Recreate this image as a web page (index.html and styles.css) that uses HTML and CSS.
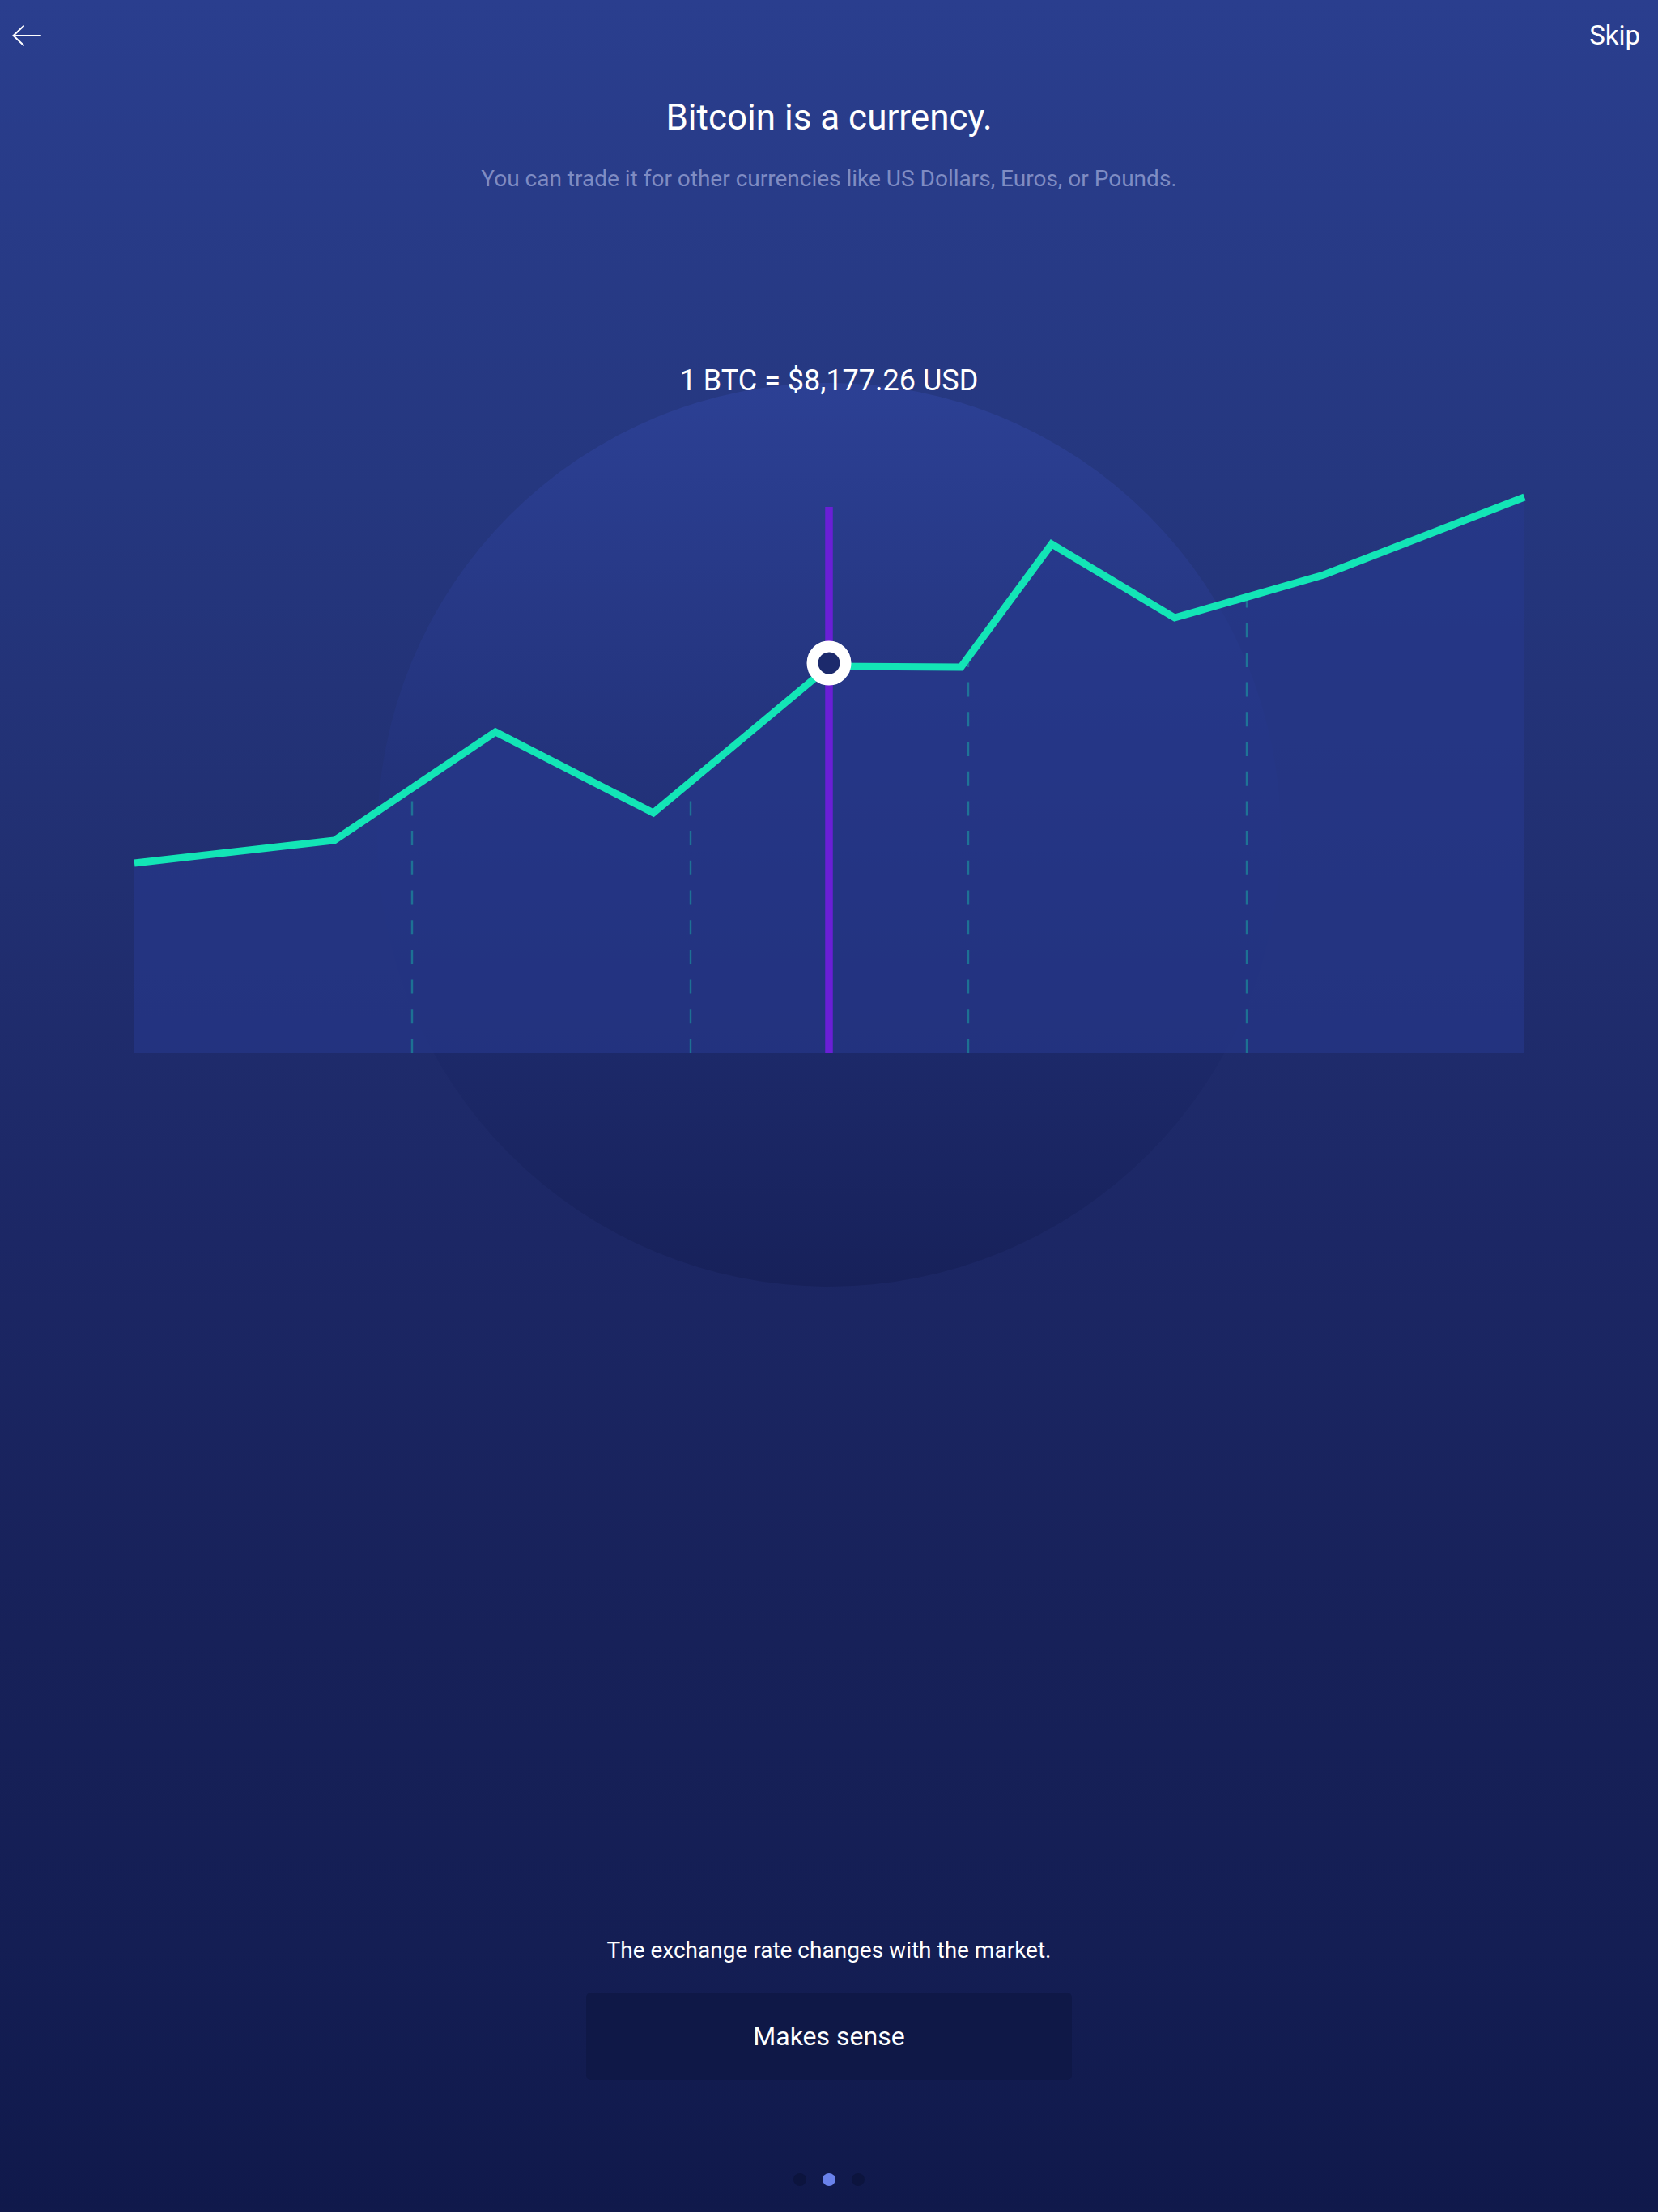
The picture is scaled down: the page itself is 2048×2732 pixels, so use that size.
FILE: index.html
```html
<!DOCTYPE html>
<html lang="en">
<head>
<meta charset="utf-8">
<title>Bitcoin is a currency.</title>
<link rel="stylesheet" href="styles.css">
</head>
<body>
<div class="screen">
  <header class="topbar">
    <button class="back" aria-label="Back">
      <svg width="36" height="26" viewBox="0 0 36 26" fill="none" stroke="#ffffff" stroke-width="2" stroke-linecap="round" stroke-linejoin="round">
        <path d="M1.5 13 H35"/>
        <path d="M14 1.2 L1.5 13 L14 24.8"/>
      </svg>
    </button>
    <span class="skip">Skip</span>
  </header>

  <h1 class="title">Bitcoin is a currency.</h1>
  <p class="subtitle">You can trade it for other currencies like US Dollars, Euros, or Pounds.</p>

  <section class="chart">
    <svg class="chart-art" width="2048" height="1180" viewBox="0 420 2048 1180">
      <defs>
        <linearGradient id="orb" x1="0" y1="0" x2="0" y2="1">
          <stop offset="0" stop-color="#2c4094"/>
          <stop offset="1" stop-color="#17215a"/>
        </linearGradient>
      </defs>
      <circle cx="1024" cy="1032" r="558" fill="url(#orb)"/>
      <polygon fill="#26398c" fill-opacity="0.62"
        points="166,1067 413,1039 612,905 807,1005 1024,824 1187,825 1299,673 1451,764 1635,711 1883,615 1883,1302 166,1302"/>
      <g stroke="#13e5b6" stroke-opacity="0.35" stroke-width="2.4" stroke-dasharray="18 18.7">
        <line x1="509" y1="1302" x2="509" y2="978"/>
        <line x1="853" y1="1302" x2="853" y2="970"/>
        <line x1="1196" y1="1302" x2="1196" y2="814"/>
        <line x1="1540" y1="1302" x2="1540" y2="740"/>
      </g>
      <line x1="1024" y1="627" x2="1024" y2="1302" stroke="#6a1fd6" stroke-width="9.5"/>
      <polyline fill="none" stroke="#13e5b6" stroke-width="9" stroke-linejoin="miter"
        points="166,1067 413,1039 612,905 807,1005 1024,824 1187,825 1299,673 1451,764 1635,711 1883,615"/>
      <circle cx="1024" cy="820" r="20.5" fill="#1c2a6c" stroke="#ffffff" stroke-width="14"/>
    </svg>
    <p class="price">1 BTC = $8,177.26 USD</p>
  </section>

  <footer class="bottom">
    <p class="note">The exchange rate changes with the market.</p>
    <button class="cta">Makes sense</button>
    <div class="dots">
      <span class="dot"></span>
      <span class="dot active"></span>
      <span class="dot"></span>
    </div>
  </footer>
</div>
</body>
</html>
```
FILE: styles.css
```css
* { box-sizing: border-box; }

html, body {
  margin: 0;
  padding: 0;
}

body {
  font-family: Roboto, "Noto Sans", "Liberation Sans", sans-serif;
  color: #ffffff;
  background: #10184a;
}

.screen {
  width: 2048px;
  height: 2732px;
  display: flex;
  flex-direction: column;
  align-items: stretch;
  background: linear-gradient(180deg, #2a3e8e 0%, #25377f 22%, #212f71 40%, #1c2765 56%, #172159 74%, #141e54 88%, #10194b 100%);
  overflow: hidden;
}

.topbar {
  height: 88px;
  display: flex;
  align-items: center;
  justify-content: space-between;
  padding: 0 22px 0 15px;
}

.back {
  background: none;
  border: 0;
  padding: 0;
  width: 36px;
  height: 26px;
  display: flex;
}

.skip {
  font-size: 33px;
  line-height: 40px;
  color: #ffffff;
}

.title {
  margin: 31px 0 0;
  font-size: 44px;
  line-height: 52px;
  font-weight: 400;
  text-align: center;
}

.subtitle {
  margin: 32px 0 0;
  font-size: 28px;
  line-height: 36px;
  text-align: center;
  color: #7f8cc3;
}

.chart {
  position: relative;
  margin-top: 180px;
  height: 1180px;
}

.chart-art {
  position: absolute;
  left: 0;
  top: 0;
  display: block;
}

.price {
  position: relative;
  margin: 0;
  padding-top: 29px;
  font-size: 36px;
  line-height: 44px;
  text-align: center;
}

.bottom {
  margin-top: auto;
  display: flex;
  flex-direction: column;
  align-items: center;
  padding-bottom: 32px;
}

.note {
  margin: 0;
  font-size: 28px;
  line-height: 36px;
}

.cta {
  margin-top: 34px;
  width: 600px;
  height: 108px;
  border: 0;
  border-radius: 6px;
  background: #0f1847;
  color: #ffffff;
  font-family: Roboto, "Noto Sans", "Liberation Sans", sans-serif;
  font-size: 32px;
}

.dots {
  margin-top: 115px;
  height: 16px;
  display: flex;
  gap: 20px;
}

.dot {
  width: 16px;
  height: 16px;
  border-radius: 50%;
  background: #0c143e;
}

.dot.active {
  background: #6a82ea;
}
```
